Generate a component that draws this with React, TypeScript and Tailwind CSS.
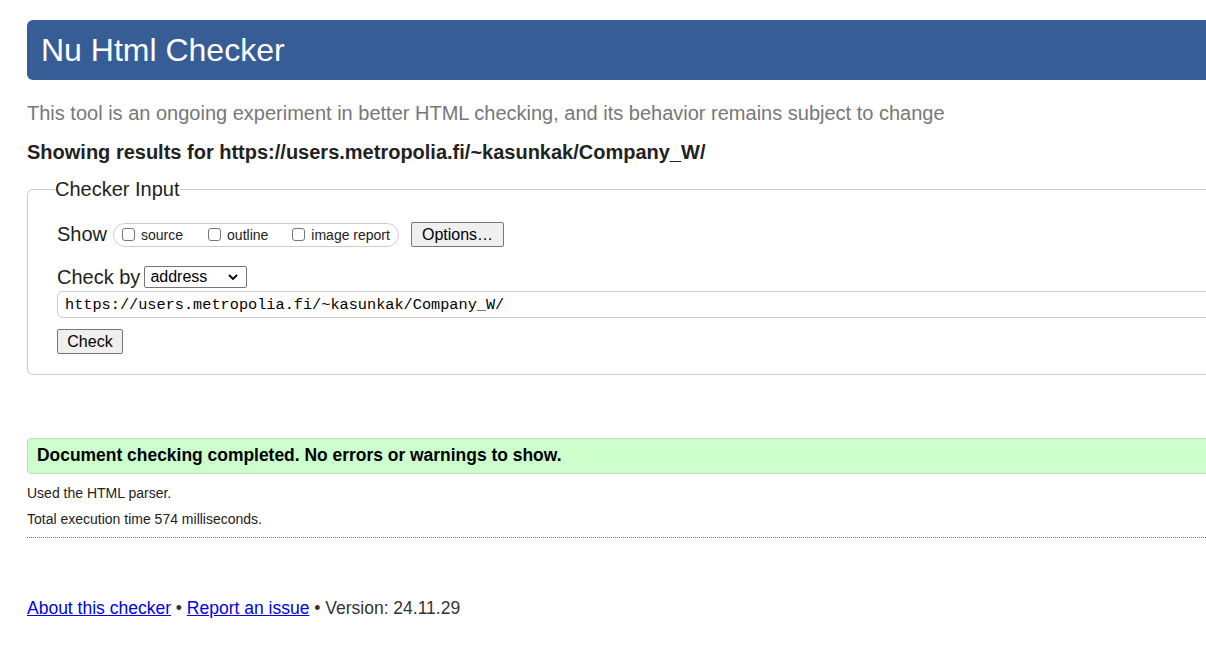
import React from 'react';

const Checkbox: React.FC<{ label: string; className?: string }> = ({ label, className = '' }) => (
  <label className={`flex items-center ${className}`}>
    <span className="w-[13px] h-[13px] border border-[#767676] rounded-[3px] bg-white" />
    <span className="ml-[6px] text-[14px] leading-none text-[#222]">{label}</span>
  </label>
);

const App: React.FC = () => {
  return (
    <div className="w-[1206px] h-[653px] overflow-hidden bg-white font-['Liberation_Sans',Arial,sans-serif] text-[#222]">
      <div className="w-[1400px] pl-[27px] pt-[20px]">
        <header className="h-[60px] bg-[#365d95] rounded-l-[6px] pl-[14px] flex items-center">
          <h1 className="text-[32px] leading-none text-white">Nu Html Checker</h1>
        </header>

        <p className="mt-[21px] text-[20px] leading-[24px] text-[#777]">
          This tool is an ongoing experiment in better HTML checking, and its behavior remains subject to change
        </p>

        <p className="mt-[16px] text-[20px] leading-[22px] font-bold">
          Showing results for https://users.metropolia.fi/~kasunkak/Company_W/
        </p>

        <fieldset className="mt-[14px] border border-[#cccccc] rounded-[6px] pl-[29px] pt-[21px] pb-[20px]">
          <legend className="-ml-[2px] text-[20px] leading-[24px] px-0">Checker Input</legend>

          <div className="flex items-center h-[25px]">
            <span className="text-[20px] leading-none -mt-[2px]">Show</span>
            <div className="ml-[6px] h-[24px] w-[286px] border border-[#cccccc] rounded-[12px] flex items-center pl-[8px]">
              <Checkbox label="source" />
              <Checkbox label="outline" className="ml-[25px]" />
              <Checkbox label="image report" className="ml-[24px]" />
            </div>
            <button className="ml-[12px] h-[25px] w-[93px] bg-[#efefef] border border-[#767676] rounded-[2px] text-[16px] leading-none text-black">
              Options…
            </button>
          </div>

          <div className="mt-[19px] flex items-center h-[22px]">
            <span className="text-[20px] leading-none">Check by</span>
            <div className="ml-[4px] h-[22px] w-[103px] border border-[#767676] rounded-[2px] flex items-center justify-between pl-[5px] pr-[8px]">
              <span className="text-[16px] leading-none text-black">address</span>
              <svg width="10" height="6" viewBox="0 0 10 6" fill="none">
                <path d="M1 1l4 4 4-4" stroke="#000" strokeWidth="1.8" />
              </svg>
            </div>
          </div>

          <div className="mt-[3px] h-[27px] border border-[#cccccc] rounded-[6px] flex items-center pl-[7px] pt-[3px]">
            <span className="font-['Liberation_Mono',monospace] text-[15.25px] leading-none text-black">
              https://users.metropolia.fi/~kasunkak/Company_W/
            </span>
          </div>

          <button className="mt-[11px] h-[25px] w-[66px] bg-[#efefef] border border-[#767676] rounded-[2px] text-[16px] leading-none text-black">
            Check
          </button>
        </fieldset>

        <div className="mt-[63px] h-[36px] bg-[#ccffcc] border border-[#bbddbb] rounded-l-[4px] flex items-center pl-[9px]">
          <span className="text-[17.45px] leading-none font-bold text-black">
            Document checking completed. No errors or warnings to show.
          </span>
        </div>

        <p className="mt-[11px] text-[14px] leading-[17px]">Used the HTML parser.</p>
        <p className="mt-[9px] text-[14px] leading-[17px]">Total execution time 574 milliseconds.</p>

        <div className="mt-[9px] border-t border-dotted border-[#777]" />

        <p className="mt-[60px] text-[17.5px] leading-[21px] text-[#333]">
          <a href="#" className="text-[#0000ee] underline">About this checker</a>
          {' • '}
          <a href="#" className="text-[#0000ee] underline">Report an issue</a>
          {' • Version: 24.11.29'}
        </p>
      </div>
    </div>
  );
};

export default App;
